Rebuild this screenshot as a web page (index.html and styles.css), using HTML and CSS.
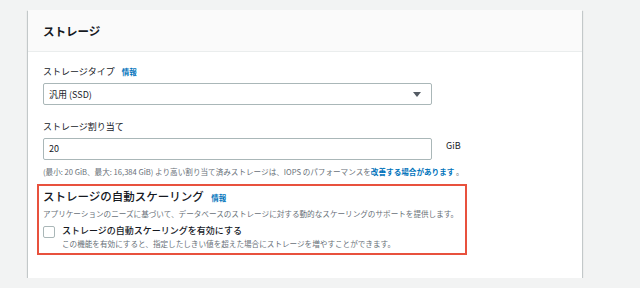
FILE: index.html
```html
<!DOCTYPE html>
<html lang="ja">
<head>
    <meta charset="UTF-8">
    <title>ストレージ</title>
    <link rel="stylesheet" href="styles.css">
</head>
<body>
    <div class="panel">
        <div class="panel-header">ストレージ</div>
        <div class="panel-body">
            <!-- Storage type -->
            <div class="field-label">ストレージタイプ <a class="info">情報</a></div>
            <div class="select-box">
                <span>汎用 (SSD)</span>
                <span class="caret"></span>
            </div>

            <!-- Allocated storage -->
            <div class="field-label label-gap">ストレージ割り当て</div>
            <div class="input-row">
                <div class="text-input">20</div>
                <span class="unit">GiB</span>
            </div>
            <div class="hint">(最小: 20 GiB、最大: 16,384 GiB) より高い割り当て済みストレージは、IOPS のパフォーマンスを<a class="link">改善する場合があります</a> 。</div>

            <!-- Autoscaling (highlighted) -->
            <div class="highlight">
                <div class="sub-title">ストレージの自動スケーリング <a class="info">情報</a></div>
                <div class="hint">アプリケーションのニーズに基づいて、データベースのストレージに対する動的なスケーリングのサポートを提供します。</div>
                <label class="check-row">
                    <span class="checkbox"></span>
                    <span>
                        <span class="check-label">ストレージの自動スケーリングを有効にする</span>
                        <span class="hint">この機能を有効にすると、指定したしきい値を超えた場合にストレージを増やすことができます。</span>
                    </span>
                </label>
            </div>
        </div>
    </div>
</body>
</html>
```

FILE: styles.css
```css
/* General */
body {
    margin: 0;
    background: #f2f3f3;
    font-family: "Noto Sans CJK JP", "Noto Sans", sans-serif;
    color: #16191f;
}

.panel {
    width: 554px;
    height: 268px;
    margin: 10px 0 0 28px;
    background: #fff;
    box-shadow: 0 1px 1px 0 rgba(0, 28, 36, 0.3), 1px 1px 1px 0 rgba(0, 28, 36, 0.15), -1px 1px 1px 0 rgba(0, 28, 36, 0.15);
}

.panel-header {
    height: 41px;
    padding: 0 15px;
    background: #fafafa;
    border-bottom: 1px solid #eaeded;
    font-size: 11.5px;
    font-weight: 700;
    line-height: 42px;
}

.panel-body {
    padding: 12px 15px 0;
}

.field-label {
    font-size: 9px;
    line-height: 16px;
    margin-bottom: 3px;
}

.label-gap {
    margin-top: 14px;
}

.info {
    margin-left: 5px;
    color: #0073bb;
    font-size: 7.5px;
    font-weight: 700;
}

.select-box {
    width: 377px;
    height: 20px;
    padding: 0 5px;
    border: 1px solid #aab7b8;
    border-radius: 2px;
    display: flex;
    align-items: center;
    justify-content: space-between;
    font-size: 9px;
}

.caret {
    width: 0;
    height: 0;
    margin-right: 5px;
    border-left: 4px solid transparent;
    border-right: 4px solid transparent;
    border-top: 5px solid #545b64;
}

.input-row {
    display: flex;
    align-items: flex-start;
}

.text-input {
    width: 377px;
    height: 20px;
    padding: 0 5px;
    border: 1px solid #aab7b8;
    border-radius: 2px;
    font-size: 9px;
    line-height: 20px;
}

.unit {
    margin-left: 14px;
    font-size: 9px;
    line-height: 16px;
}

.hint {
    display: block;
    color: #687078;
    font-size: 7.6px;
    line-height: 13px;
    margin-top: 5px;
}

.link {
    color: #0073bb;
    font-weight: 700;
}

.highlight {
    width: 418px;
    margin: 6px 0 0 -6px;
    padding: 1px 4px 3px;
    border: 2px solid #e8513d;
}

.highlight .hint {
    margin-top: 0;
}

.sub-title {
    font-size: 11.5px;
    font-weight: 500;
    line-height: 18px;
}

.check-row {
    display: flex;
    align-items: flex-start;
    margin-top: 4px;
}

.checkbox {
    width: 10px;
    height: 10px;
    margin: 2px 7px 0 0;
    border: 1px solid #aab7b8;
    border-radius: 2px;
    flex-shrink: 0;
}

.check-label {
    display: block;
    font-size: 9px;
    font-weight: 500;
    line-height: 13px;
}
```
